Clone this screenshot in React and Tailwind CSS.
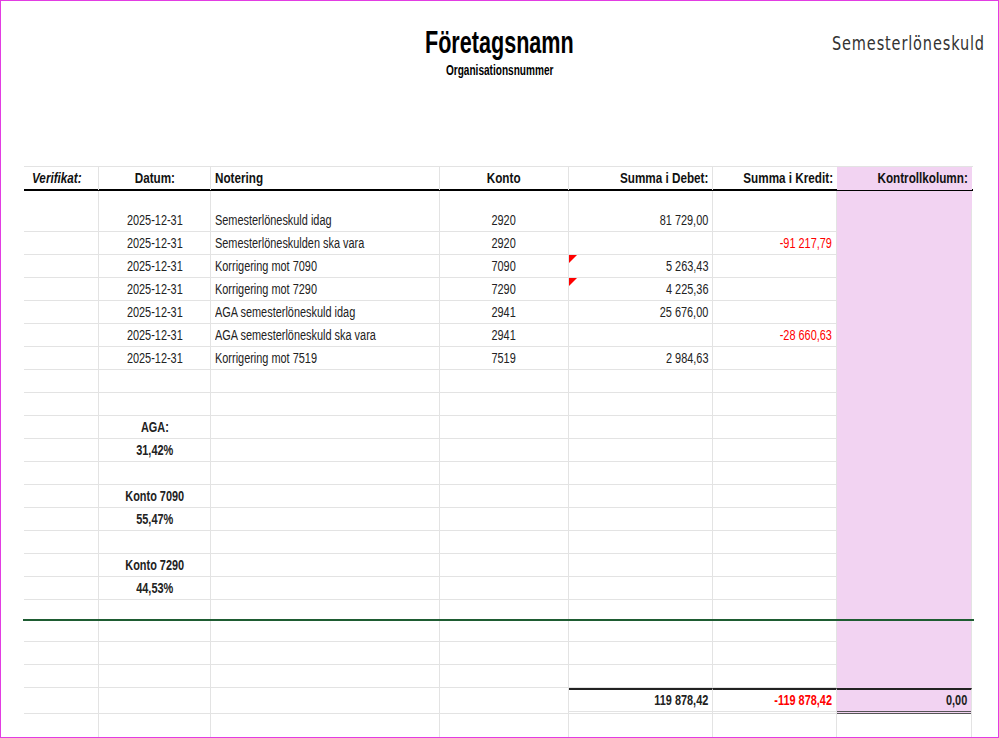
import React from "react";

const cols = "grid grid-cols-[75px_112px_229px_129px_144px_124px_135px]";
const F = { fontFamily: '"Liberation Sans",Arial,sans-serif' };

const L = ({ children }) => <span className="inline-block whitespace-nowrap scale-x-[0.78] origin-left">{children}</span>;
const C = ({ children }) => <span className="inline-block whitespace-nowrap scale-x-[0.78] origin-center">{children}</span>;
const R = ({ children }) => <span className="inline-block whitespace-nowrap scale-x-[0.78] origin-right">{children}</span>;

function Row({ h = 23, cells = [], line = true, pinkFill = true, tri = false, totals = false }) {
  const [a, b, c, d, e, f, g] = cells;
  const base = "flex items-center border-r border-[#e3e3e3] px-1 text-[14px] text-[#222]";
  const bb = line ? "border-b border-b-[#e3e3e3]" : "";
  const tot = "border-t-2 border-t-[#222] border-b-[3px] border-b-[#555] border-double font-bold";
  return (
    <div className={cols} style={{ height: h }}>
      <div className={`${base} ${bb}`}>{a}</div>
      <div className={`${base} ${bb} justify-center font-bold`}>{b && <C>{b}</C>}</div>
      <div className={`${base} ${bb}`}>{c && <L>{c}</L>}</div>
      <div className={`${base} ${bb} justify-center`}>{d && <C>{d}</C>}</div>
      <div className={`${base} ${bb} justify-end relative ${totals ? tot : ""}`}>
        {tri && <span className="absolute left-0 top-0 w-0 h-0 border-t-[8px] border-t-[#f00] border-r-[8px] border-r-transparent" />}
        {e && <R>{e}</R>}
      </div>
      <div className={`${base} ${bb} justify-end text-[#f00] ${totals ? tot + " text-[#f00]" : ""}`}>{f && <R>{f}</R>}</div>
      <div className={`${base} ${pinkFill ? "bg-[#f2d3f2]" : bb} justify-end ${totals ? tot : ""}`}>{g && <R>{g}</R>}</div>
    </div>
  );
}

export default function App() {
  const data = [
    ["Semesterlöneskuld idag", "2920", "81 729,00", ""],
    ["Semesterlöneskulden ska vara", "2920", "", "-91 217,79"],
    ["Korrigering mot 7090", "7090", "5 263,43", "", true],
    ["Korrigering mot 7290", "7290", "4 225,36", "", true],
    ["AGA semesterlöneskuld idag", "2941", "25 676,00", ""],
    ["AGA semesterlöneskuld ska vara", "2941", "", "-28 660,63"],
    ["Korrigering mot 7519", "7519", "2 984,63", ""],
  ];
  const side = ["", "", "AGA:", "31,42%", "", "Konto 7090", "55,47%", "", "Konto 7290", "44,53%"];
  return (
    <div className="w-[999px] h-[738px] border border-[#e23de2] bg-white overflow-hidden relative" style={F}>
      <div className="relative h-[165px]">
        <div className="absolute left-0 right-0 top-[24px] flex flex-col items-center">
          <div className="text-[30px] font-bold leading-[36px] text-black whitespace-nowrap" style={{ transform: "scale(0.72,1.05)" }}>Företagsnamn</div>
          <div className="text-[14px] font-bold leading-[16px] mt-[1px] whitespace-nowrap" style={{ transform: "scaleX(0.72)" }}>Organisationsnummer</div>
        </div>
        <div className="absolute right-[13px] top-[28px] text-[19px] tracking-[1px] text-[#333] whitespace-nowrap scale-x-[0.85] origin-right" style={{ fontFamily: '"DejaVu Sans Condensed",sans-serif' }}>Semesterlöneskuld</div>
      </div>
      <div className="ml-[23px] w-[949px]">
        <div className={`${cols} h-[25px] border-t border-[#e3e3e3] border-b-2 border-b-black font-bold text-[15px] text-[#111]`}>
          <div className="flex items-center px-2 italic border-r border-[#e3e3e3]"><L>Verifikat:</L></div>
          <div className="flex items-center justify-center border-r border-[#e3e3e3]"><C>Datum:</C></div>
          <div className="flex items-center px-1 border-r border-[#e3e3e3]"><L>Notering</L></div>
          <div className="flex items-center justify-center border-r border-[#e3e3e3]"><C>Konto</C></div>
          <div className="flex items-center justify-end px-1 border-r border-[#e3e3e3]"><R>Summa i Debet:</R></div>
          <div className="flex items-center justify-end px-1"><R>Summa i Kredit:</R></div>
          <div className="flex items-center justify-end px-1 bg-[#f2d3f2]"><R>Kontrollkolumn:</R></div>
        </div>
        <div className={cols} style={{ height: 18 }}>
          {[0, 1, 2, 3, 4, 5].map(i => <div key={i} className="border-r border-[#e3e3e3]" />)}
          <div className="bg-[#f2d3f2]" />
        </div>
        {data.map((d, i) => (
          <Row key={i} cells={["", <span className="font-normal">2025-12-31</span>, d[0], d[1], d[2], d[3], ""]} tri={d[4]} />
        ))}
        {side.map((s, i) => (
          <Row key={"s" + i} cells={["", s, "", "", "", "", ""]} />
        ))}
        <Row h={19} cells={[]} line={false} />
        <div className="border-t-2 border-[#1e5c32] -ml-[1px] w-[951px]" />
        <Row h={21} cells={[]} />
        <Row h={23} cells={[]} />
        <Row h={23} cells={[]} />
        <Row h={23} cells={["", "", "", "", "119 878,42", "-119 878,42", "0,00"]} totals />
        <Row h={28} cells={[]} pinkFill={false} />
      </div>
    </div>
  );
}
